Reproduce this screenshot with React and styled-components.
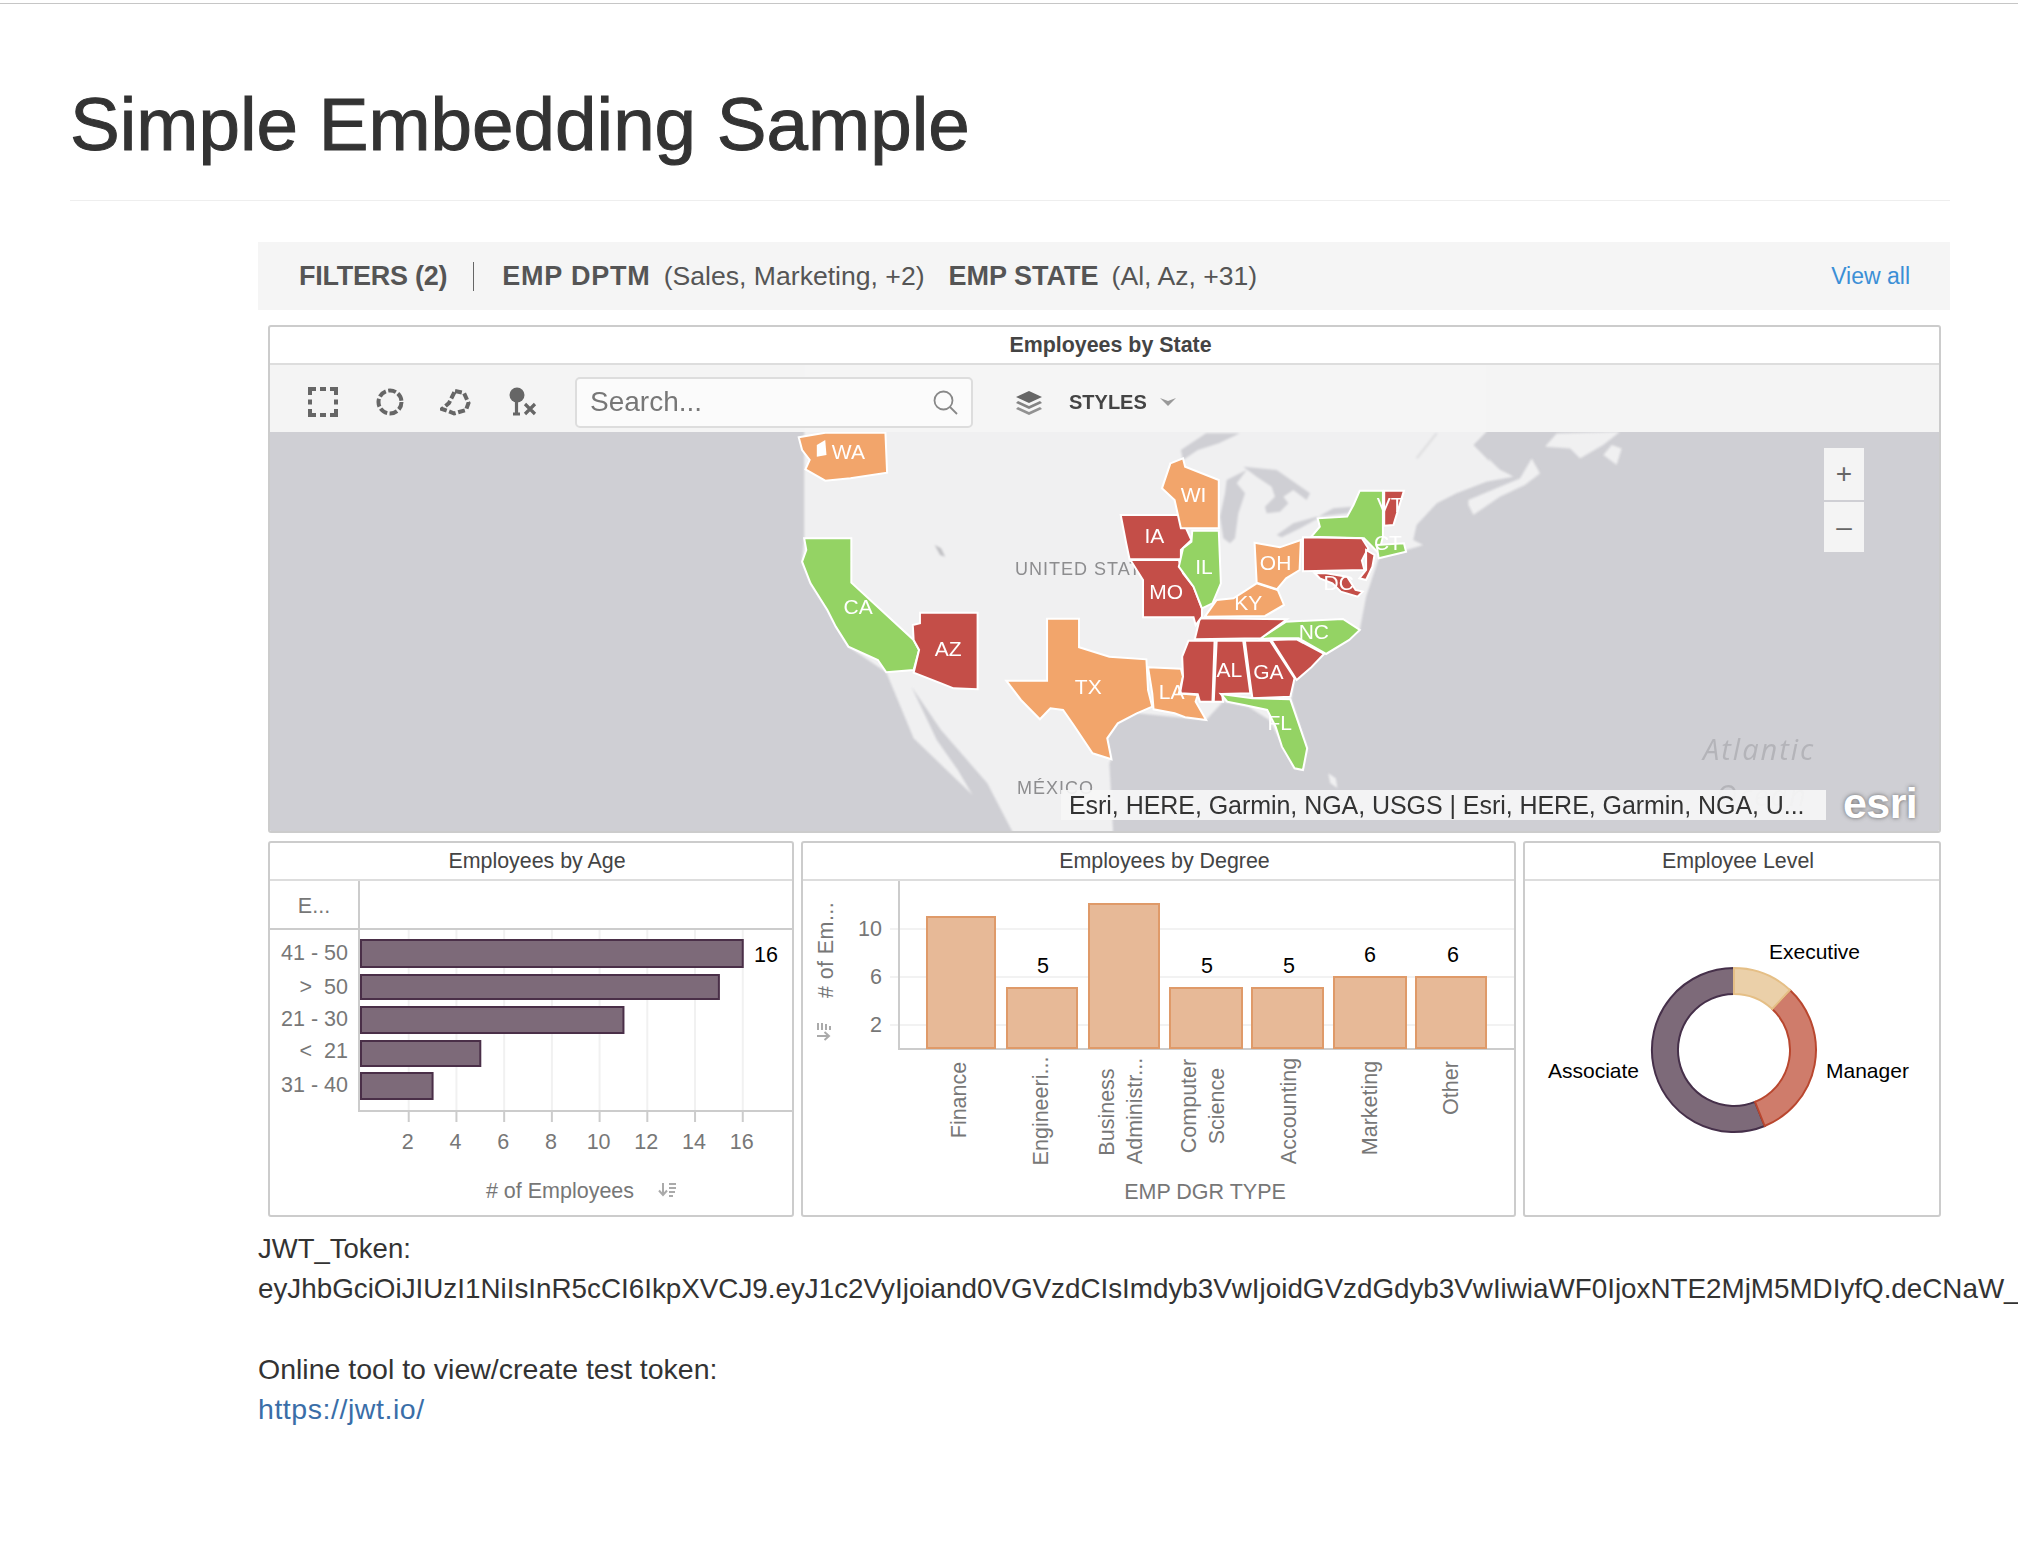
import React from 'react';
import styled, { createGlobalStyle } from 'styled-components';

const GlobalStyle = createGlobalStyle`
  html, body {
    margin: 0;
    padding: 0;
    background: #fff;
    overflow-x: hidden;
    font-family: "Liberation Sans", Arial, sans-serif;
  }
`;

const TopRule = styled.div`
  height: 3px;
  border-bottom: 1px solid #c6c6c6;
`;

const Page = styled.div`
  width: 1880px;
  margin-left: 70px;
  min-height: 1554px;
`;

const Header = styled.div`
  height: 197px;
  border-bottom: 1px solid #eee;
  box-sizing: border-box;
  padding-top: 76px;
`;

const Title = styled.h1`
  margin: 0;
  font-size: 74.6px;
  line-height: 88px;
  font-weight: 400;
  color: #333;
  -webkit-text-stroke: 1px #333;
`;

const Content = styled.div`
  margin: 41px 0 0 188px;
`;

const FilterBar = styled.div`
  display: flex;
  align-items: center;
  height: 68px;
  box-sizing: border-box;
  background: #f5f5f5;
  padding: 1px 40px 0 41px;
  font-size: 27px;
  color: #555;
  white-space: nowrap;
`;

const FilterName = styled.span`
  font-weight: 700;
  margin-right: ${p => p.$gap ?? 13}px;
  letter-spacing: ${p => p.$spacing ?? 0}px;
`;

const FilterValue = styled.span`
  font-size: 26.6px;
  margin-right: 24px;
`;

const FilterDivider = styled.span`
  width: 1px;
  height: 29px;
  background: #666;
  margin: 0 28px 0 26px;
`;

const ViewAll = styled.a`
  margin-left: auto;
  font-size: 23px;
  color: #3b8fd6;
`;

const Dashboard = styled.div`
  margin: 15px 9px 0 10px;
`;

const Card = styled.div`
  box-sizing: border-box;
  border: 2px solid #ccc;
  border-radius: 3px;
  background: #fff;
  overflow: hidden;
  height: ${p => p.$height}px;
  display: flex;
  flex-direction: column;
`;

const CardTitle = styled.div`
  flex: none;
  height: 38px;
  line-height: 36px;
  box-sizing: border-box;
  border-bottom: 2px solid #ddd;
  text-align: center;
  padding-left: 12px;
  font-size: 21.4px;
  font-weight: ${p => (p.$strong ? 700 : 400)};
  color: #444;
`;

const MapArea = styled.div`
  position: relative;
  flex: 1;
  overflow: hidden;
  background: #cfcfd4;
`;

const MapDrawing = styled.svg`
  display: block;
  width: 100%;
  height: 100%;
`;

const BaseLayer = styled.g`
  filter: blur(1px);
`;

const Toolbar = styled.div`
  position: absolute;
  left: 0;
  right: 0;
  top: 0;
  height: 67px;
  box-sizing: border-box;
  background: rgba(245, 245, 245, 0.97);
  display: flex;
  align-items: center;
  padding: 7px 0 0 38px;
`;

const ToolIcon = styled.svg`
  flex: none;
  display: block;
  margin-right: ${p => p.$gap}px;
`;

const SearchBox = styled.div`
  box-sizing: border-box;
  flex: none;
  width: 398px;
  height: 51px;
  margin-right: 42px;
  background: rgba(252, 252, 252, 0.9);
  border: 2px solid #ddd;
  border-radius: 5px;
  display: flex;
  align-items: center;
  justify-content: space-between;
  padding: 0 13px;
  font-size: 28px;
  color: #777;
`;

const StylesLabel = styled.span`
  font-size: 20px;
  font-weight: 700;
  color: #444;
  margin: 0 13px 0 26px;
`;

const ZoomControl = styled.div`
  position: absolute;
  left: 1554px;
  top: 83px;
  width: 40px;
  display: flex;
  flex-direction: column;
  gap: 2px;
`;

const ZoomButton = styled.div`
  height: ${p => p.$height}px;
  background: #f4f4f4;
  color: #666;
  font-size: 28px;
  display: flex;
  align-items: center;
  justify-content: center;
`;

const Attribution = styled.div`
  position: absolute;
  left: 791px;
  top: 425px;
  width: 765px;
  height: 30px;
  box-sizing: border-box;
  padding-left: 8px;
  background: rgba(246, 246, 246, 0.92);
  font-size: 25px;
  line-height: 30px;
  letter-spacing: -0.05px;
  color: #333;
  white-space: nowrap;
`;

const EsriMark = styled.div`
  position: absolute;
  left: 1573px;
  top: 413px;
  font-size: 43px;
  line-height: 50px;
  font-weight: 700;
  letter-spacing: -0.6px;
  color: #fff;
  text-shadow: 0 0 4px rgba(90, 90, 90, 0.9);
`;

const ChartRow = styled.div`
  display: grid;
  grid-template-columns: 526px 715px 418px;
  column-gap: 7px;
  margin-top: 8px;
`;

const ChartDrawing = styled.svg`
  display: block;
  flex: 1;
  min-height: 0;
  width: 100%;
  font-family: "Liberation Sans", Arial, sans-serif;
`;

const Notes = styled.div`
  margin-top: 12px;
  line-height: 40px;
  color: #333;
  white-space: nowrap;
`;

const NoteLine = styled.div`
  min-height: 40px;
  font-size: ${p => p.$size}px;
`;

const NoteLink = styled.a`
  color: #3a6ea8;
  text-decoration: none;
  letter-spacing: 0.55px;
`;

const StatePoly = styled.polygon`
  fill: ${p => ({ o: '#f2a56b', r: '#c44e48', g: '#94d364' }[p.$tone])};
  stroke: #fff;
  stroke-width: 2px;
  vector-effect: non-scaling-stroke;
`;

const StateLabel = styled.text`
  fill: #fff;
  font-family: "Liberation Sans", Arial, sans-serif;
  font-size: 21px;
  text-anchor: middle;
`;

const PlaceLabel = styled.text`
  fill: #8d8d8f;
  font-family: "Liberation Sans", Arial, sans-serif;
  font-size: 18px;
  letter-spacing: 1px;
`;

const SeaLabel = styled.text`
  fill: #b4b4b9;
  font-family: "Open Sans", sans-serif;
  font-style: italic;
  font-size: 29px;
  letter-spacing: 2px;
`;

const AxisText = styled.text`
  fill: ${p => p.$fill || '#777'};
  font-size: ${p => p.$size || 21.5}px;
  text-anchor: ${p => p.$anchor || 'middle'};
`;

// state shapes are traced at 2.376 x 3 from the top-left of the crop at (760, 430)
const STATES = [
  ['o', '92,22 155,8 298,8 302,128 215,145 155,152 108,118 118,90 100,60'],
  ['g', '105,325 217,325 217,458 365,630 378,660 365,720 300,727 280,690 210,650 180,590 160,540 120,460 100,395 110,360'],
  ['r', '380,548 517,548 517,778 460,775 365,728 378,660 365,630 363,585 380,580'],
  ['o', '682,566 758,566 758,652 830,680 918,688 922,780 932,830 895,850 850,880 825,925 835,988 790,970 745,885 720,840 690,835 665,868 620,810 585,752 682,752'],
  ['o', '922,712 1000,716 1005,740 995,790 1040,795 1035,815 1060,870 1010,862 985,850 935,838 932,790'],
  ['r', '1018,632 1080,632 1075,815 1045,815 1040,793 998,790 1005,740 1003,680'],
  ['r', '1085,632 1148,632 1165,790 1098,792 1100,815 1078,815'],
  ['r', '1152,632 1212,632 1270,745 1260,800 1170,805 1165,760'],
  ['r', '1215,630 1275,628 1340,672 1310,712 1275,750'],
  ['g', '1185,628 1250,575 1385,567 1425,600 1400,630 1345,672 1280,625 1215,625'],
  ['r', '1045,565 1252,568 1190,625 1033,628'],
  ['o', '1057,560 1085,510 1125,505 1180,460 1230,480 1245,525 1200,558'],
  ['o', '1175,338 1235,352 1285,330 1282,420 1250,445 1228,478 1180,458'],
  ['g', '1425,182 1480,182 1480,320 1470,370 1435,325 1310,320 1330,290 1325,265 1395,260 1410,225'],
  ['r', '1290,322 1430,325 1445,355 1430,392 1436,420 1290,424'],
  ['r', '1440,360 1460,375 1455,410 1440,450 1424,445 1440,420'],
  ['r', '1318,430 1345,430 1395,440 1415,480 1432,485 1420,500 1380,485 1360,460 1330,445'],
  ['g', '1465,345 1530,340 1535,365 1470,385'],
  ['r', '1483,182 1530,182 1505,285 1483,287'],
  ['r', '857,255 998,255 1025,330 1000,360 1000,388 878,388 870,340'],
  ['o', '975,100 1005,85 1010,110 1090,150 1090,295 1000,295 985,210 955,175'],
  ['r', '880,390 995,390 1005,430 1030,470 1050,535 1050,560 1035,585 1030,562 910,562 910,450'],
  ['g', '1027,302 1090,302 1095,460 1075,520 1050,535 1030,470 995,410 1005,355 1025,335'],
  ['g', '1095,792 1170,805 1260,808 1300,955 1290,1020 1270,1015 1240,950 1225,890 1205,840 1150,825 1110,815'],
];

const LABELS = [
  ['WA', 210, 65], ['WI', 1030, 195], ['IA', 937, 318], ['IL', 1055, 412], ['MO', 965, 485],
  ['OH', 1225, 400], ['KY', 1160, 520], ['CA', 233, 530], ['AZ', 447, 658], ['TX', 780, 772],
  ['LA', 978, 785], ['AL', 1115, 720], ['GA', 1208, 725], ['NC', 1316, 605], ['FL', 1235, 880],
  ['VT', 1497, 225], ['CT', 1492, 340], ['DC', 1375, 460],
];

const LAND = '105,-30 105,325 100,395 120,460 160,540 210,650 300,727 365,925 505,1095 470,1020 420,930 360,770 430,900 540,1060 610,1230 840,1230 830,1000 835,988 825,925 850,880 895,850 1060,870 1100,815 1160,830 1210,870 1240,940 1270,1015 1290,1020 1300,955 1262,808 1270,745 1340,672 1425,600 1440,500 1470,385 1576,345 1552,330 1560,285 1608,220 1655,190 1726,155 1790,140 1742,110 1726,85 1695,45 1726,5 1726,-200 105,-200';

// lakes are traced 3x from the crop at (1200, 460)
const LAKES = [
  '75,100 60,170 70,235 90,250 105,235 115,160 135,100 110,70 140,30 80,60',
  '130,20 230,30 330,100 320,120 280,90 250,110 265,130 240,155 200,160 195,140 225,110 215,80 170,50',
  '230,225 280,190 350,170 355,175 300,205 245,232',
  '355,170 400,145 455,140 445,160 375,168',
];

// 3x from the crop at (1340, 425)
const ISLANDS = [
  '385,240 400,270 480,215 555,180 600,145 575,100 540,160 480,185 385,225',
  '615,65 650,25 840,20 790,60 720,100 690,70',
  '790,90 830,120 845,70 815,60',
  '445,100 480,135 520,155 490,150 450,125',
];

const BAR_AGE = [
  ['41 - 50', 16, 940, 967, 953],
  ['>  50', 15, 975, 999, 987],
  ['21 - 30', 11, 1007, 1033, 1019],
  ['<  21', 5, 1041, 1066, 1051],
  ['31 - 40', 3, 1073, 1099, 1085],
];

const BAR_DEGREE = [
  [927, 68, 917], [1007, 70, 988, '5', 1043, 973], [1089, 70, 904],
  [1170, 72, 988, '5', 1207, 973], [1252, 71, 988, '5', 1289, 973],
  [1334, 72, 977, '6', 1370, 962], [1416, 70, 977, '6', 1453, 962],
];

const DEGREE_NAMES = [
  ['Finance', 959, 1100], ['Engineeri...', 1041, 1111], ['Business', 1107, 1112],
  ['Administr...', 1135, 1111], ['Computer', 1189, 1106], ['Science', 1217, 1106],
  ['Accounting', 1289, 1111], ['Marketing', 1370, 1108], ['Other', 1451, 1088],
];

const arc = (start, end, outer, inner, cx, cy) => {
  const pt = (a, r) => {
    const t = ((a - 90) * Math.PI) / 180;
    return `${(cx + r * Math.cos(t)).toFixed(1)} ${(cy + r * Math.sin(t)).toFixed(1)}`;
  };
  const big = end - start > 180 ? 1 : 0;
  return `M${pt(start, outer)} A${outer} ${outer} 0 ${big} 1 ${pt(end, outer)} L${pt(end, inner)} A${inner} ${inner} 0 ${big} 0 ${pt(start, inner)} Z`;
};

const SortGlyph = ({ x, y, rotate }) => (
  <g transform={`translate(${x} ${y})${rotate ? ' rotate(-90)' : ''}`} stroke="#aaa" fill="none" strokeWidth="2">
    <path d="M5 0V11M1 7.5L5 12L9 7.5" />
    <path d="M11 1H18M11 5H18M11 9H17M11 13H15" />
  </g>
);

function MapPanel() {
  return (
    <MapArea>
      <MapDrawing viewBox="270 365 1669 466" preserveAspectRatio="none">
        <BaseLayer>
          <g transform="translate(760 430) scale(0.4209 0.3333)">
            <polygon points={LAND} fill="#f0f0f1" />
            <polygon points="1005,90 1000,60 1060,10 1140,10 1090,40 1040,60" fill="#cfcfd4" />
            <polygon points="415,345 430,355 440,380 428,375" fill="#c0c0c4" />
            <polygon points="1350,1030 1368,1045 1372,1075 1355,1060" fill="#f0f0f1" />
          </g>
          <g transform="translate(1200 460) scale(0.3333)">
            {LAKES.map(p => <polygon key={p} points={p} fill="#cfcfd4" />)}
          </g>
          <g transform="translate(1340 425) scale(0.3333)" fill="#f0f0f1">
            {ISLANDS.map(p => <polygon key={p} points={p} />)}
            <path d="M230 100L290 25" stroke="#dcdcde" strokeWidth="6" fill="none" />
          </g>
        </BaseLayer>
        <PlaceLabel x="1015" y="575">UNITED STATES</PlaceLabel>
        <PlaceLabel x="1017" y="794">MÉXICO</PlaceLabel>
        <SeaLabel x="1703" y="760">Atlantic</SeaLabel>
        <SeaLabel x="1716" y="806">Ocean</SeaLabel>
        <g transform="translate(760 430) scale(0.4209 0.3333)">
          {STATES.map(([tone, p]) => <StatePoly key={p} $tone={tone} points={p} />)}
          <polygon points="135,45 155,30 158,75 135,80" fill="#fff" />
        </g>
        {LABELS.map(([name, x, y]) => (
          <StateLabel key={name} x={760 + x / 2.376} y={437 + y / 3}>{name}</StateLabel>
        ))}
      </MapDrawing>
      <Toolbar>
        <ToolIcon $gap={38} width="30" height="30" viewBox="0 0 30 30" fill="none" stroke="#666" strokeWidth="4">
          <path d="M2 8V2H8M12 2H18M22 2H28V8M28 12.5V17.5M28 22V28H22M18 28H12M8 28H2V22M2 17.5V12.5" />
        </ToolIcon>
        <ToolIcon $gap={36} width="28" height="28" viewBox="0 0 28 28" fill="none" stroke="#666" strokeWidth="4">
          <circle cx="14" cy="14" r="11.5" strokeDasharray="8 2.4" />
        </ToolIcon>
        <ToolIcon $gap={37} width="31" height="28" viewBox="0 0 31 28" fill="none" stroke="#666" strokeWidth="4">
          <path d="M15 3L24 5L28.5 15L26 22L14 25.5L8 23L2 21L9 15Z" strokeDasharray="7 2.6" />
        </ToolIcon>
        <ToolIcon $gap={38} width="29" height="30" viewBox="0 0 29 30" fill="#666" stroke="#666">
          <circle cx="9" cy="8" r="7.5" stroke="none" />
          <path d="M5 27H12M8.5 14V27M17 17L27 27M27 17L17 27" fill="none" strokeWidth="3.2" />
        </ToolIcon>
        <SearchBox>
          Search...
          <svg width="25" height="25" viewBox="0 0 25 25" fill="none" stroke="#888" strokeWidth="1.8">
            <circle cx="10.5" cy="10.5" r="9" />
            <path d="M17 17L24 24" />
          </svg>
        </SearchBox>
        <svg width="28" height="25" viewBox="0 0 28 25" fill="#666">
          <path d="M14 1L27 7L14 13L1 7Z" />
          <path d="M3 11L14 16L25 11L27 13L14 19L1 13Z" opacity="0.8" />
          <path d="M3 17L14 22L25 17L27 19L14 25L1 19Z" opacity="0.7" />
        </svg>
        <StylesLabel>STYLES</StylesLabel>
        <svg width="16" height="8" viewBox="0 0 16 8" fill="#999">
          <path d="M0 0L8 3L16 0L8 8Z" />
        </svg>
      </Toolbar>
      <ZoomControl>
        <ZoomButton $height={52}>+</ZoomButton>
        <ZoomButton $height={50}>–</ZoomButton>
      </ZoomControl>
      <Attribution>Esri, HERE, Garmin, NGA, USGS | Esri, HERE, Garmin, NGA, U...</Attribution>
      <EsriMark>esri</EsriMark>
    </MapArea>
  );
}

function AgeChart() {
  return (
    <ChartDrawing viewBox="270 881 522 334">
      {[2, 4, 6, 8, 10, 12, 14, 16].map(t => {
        const x = 361 + t * 23.86;
        return (
          <g key={t}>
            <line x1={x} x2={x} y1="929" y2="1111" stroke="#f1f1f1" strokeWidth="2" />
            <line x1={x} x2={x} y1="1111" y2="1122" stroke="#ccc" strokeWidth="2" />
            <AxisText x={x - 1} y="1149">{t}</AxisText>
          </g>
        );
      })}
      <line x1="359" x2="359" y1="881" y2="1112" stroke="#ccc" strokeWidth="2" />
      <line x1="270" x2="794" y1="929" y2="929" stroke="#ccc" strokeWidth="2" />
      <line x1="358" x2="794" y1="1111" y2="1111" stroke="#ccc" strokeWidth="2" />
      <AxisText x="314" y="913">E...</AxisText>
      {BAR_AGE.map(([name, value, top, bottom, mid]) => (
        <g key={name}>
          <rect x="361" y={top} width={value * 23.86} height={bottom - top} fill="#7d6a79" stroke="#4a2f48" strokeWidth="2" />
          <AxisText $anchor="end" x="348" y={mid + 7} style={{ whiteSpace: 'pre' }}>{name}</AxisText>
        </g>
      ))}
      <AxisText $fill="#000" x="766" y="962">16</AxisText>
      <AxisText x="560" y="1198">
        # of Employees
      </AxisText>
      <SortGlyph x={658} y={1183} />
    </ChartDrawing>
  );
}

function DegreeChart() {
  return (
    <ChartDrawing viewBox="803 881 711 334">
      {[[10, 929], [6, 977], [2, 1025]].map(([t, y]) => (
        <g key={t}>
          <line x1="890" x2="1514" y1={y} y2={y} stroke="#f2f2f2" strokeWidth="2" />
          <AxisText $anchor="end" x="882" y={y + 7}>{t}</AxisText>
        </g>
      ))}
      <line x1="899" x2="899" y1="881" y2="1050" stroke="#ccc" strokeWidth="2" />
      <line x1="898" x2="1514" y1="1049" y2="1049" stroke="#ccc" strokeWidth="2" />
      {BAR_DEGREE.map(([x, w, top, label, lx, ly]) => (
        <g key={x}>
          <rect x={x} y={top} width={w} height={1048 - top} fill="#e7b997" stroke="#df9a69" strokeWidth="2" />
          {label && <AxisText $fill="#000" x={lx} y={ly}>{label}</AxisText>}
        </g>
      ))}
      {DEGREE_NAMES.map(([name, x, y]) => (
        <AxisText key={name} transform={`translate(${x + 7} ${y}) rotate(-90)`}>{name}</AxisText>
      ))}
      <AxisText transform="translate(833 950) rotate(-90)" style={{ letterSpacing: '0.4px' }}># of Em...</AxisText>
      <SortGlyph x={817} y={1041} rotate />
      <AxisText x="1205" y="1199">EMP DGR TYPE</AxisText>
    </ChartDrawing>
  );
}

function LevelChart() {
  const cx = 1734;
  const cy = 1050;
  return (
    <ChartDrawing viewBox="1525 881 414 334">
      <path d={arc(158, 360, 82, 56, cx, cy)} fill="#7d6a79" stroke="#46304a" strokeWidth="2" />
      <path d={arc(43, 158, 82, 56, cx, cy)} fill="#cf7c6b" stroke="#b9472f" strokeWidth="2" />
      <path d={arc(0, 43, 82, 56, cx, cy)} fill="#ebd0a9" stroke="#e5bf86" strokeWidth="2" />
      <AxisText $fill="#000" $size={21} $anchor="start" x="1769" y="959">Executive</AxisText>
      <AxisText $fill="#000" $size={21} $anchor="start" x="1548" y="1078">Associate</AxisText>
      <AxisText $fill="#000" $size={21} $anchor="start" x="1826" y="1078">Manager</AxisText>
    </ChartDrawing>
  );
}

export default function App() {
  return (
    <>
      <GlobalStyle />
      <TopRule />
      <Page>
        <Header>
          <Title>Simple Embedding Sample</Title>
        </Header>
        <Content>
          <FilterBar>
            <FilterName $gap={0} $spacing={-0.25}>FILTERS (2)</FilterName>
            <FilterDivider />
            <FilterName $spacing={0.8}>EMP DPTM</FilterName>
            <FilterValue>(Sales, Marketing, +2)</FilterValue>
            <FilterName>EMP STATE</FilterName>
            <FilterValue>(Al, Az, +31)</FilterValue>
            <ViewAll>View all</ViewAll>
          </FilterBar>
          <Dashboard>
            <Card $height={508}>
              <CardTitle $strong>Employees by State</CardTitle>
              <MapPanel />
            </Card>
            <ChartRow>
              <Card $height={376}>
                <CardTitle>Employees by Age</CardTitle>
                <AgeChart />
              </Card>
              <Card $height={376}>
                <CardTitle>Employees by Degree</CardTitle>
                <DegreeChart />
              </Card>
              <Card $height={376}>
                <CardTitle>Employee Level</CardTitle>
                <LevelChart />
              </Card>
            </ChartRow>
          </Dashboard>
          <Notes>
            <NoteLine $size={27.5}>JWT_Token:</NoteLine>
            <NoteLine $size={27.8}>eyJhbGciOiJIUzI1NiIsInR5cCI6IkpXVCJ9.eyJ1c2VyIjoiand0VGVzdCIsImdyb3VwIjoidGVzdGdyb3VwIiwiaWF0IjoxNTE2MjM5MDIyfQ.deCNaW_</NoteLine>
            <NoteLine $size={27} />
            <NoteLine $size={28.5}>Online tool to view/create test token:</NoteLine>
            <NoteLine $size={28.5}>
              <NoteLink href="#">https://jwt.io/</NoteLink>
            </NoteLine>
          </Notes>
        </Content>
      </Page>
    </>
  );
}
